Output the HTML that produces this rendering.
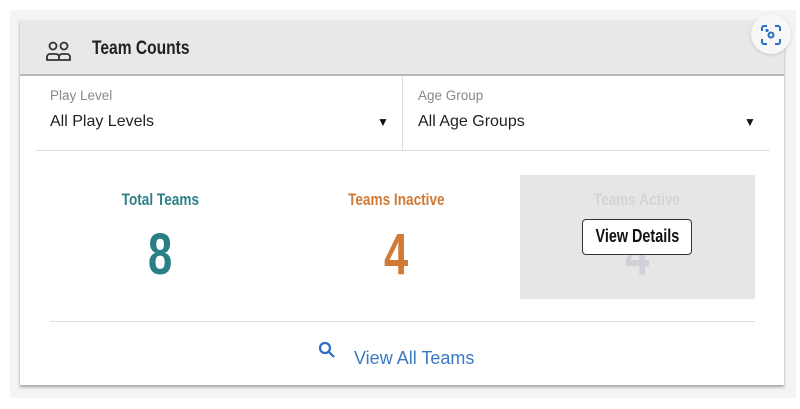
<!DOCTYPE html>
<html><head><meta charset="utf-8"><style>
*{margin:0;padding:0;box-sizing:border-box}
body{width:800px;height:409px;background:#fff;position:relative;overflow:hidden;font-family:"Liberation Sans",sans-serif}
.outer{position:absolute;left:10px;top:10px;width:786px;height:388px;background:#f4f4f4}
.card{position:absolute;left:20px;top:20px;width:764px;height:365px;background:#fff;box-shadow:0 2px 3px rgba(0,0,0,.35)}
.hdr{position:absolute;left:0;top:0;width:764px;height:56px;background:#e8e8e8;border-bottom:2px solid #b8b8b8}
.cond{font-family:"Liberation Sans",sans-serif;font-weight:bold;display:inline-block;transform-origin:center;transform:scaleX(.8)}
.t{position:absolute;left:72px;top:18px;font-size:19px;color:#222;transform-origin:left center}
.lbl{position:absolute;font-size:13.5px;color:#888}
.val{position:absolute;font-size:16px;color:#222}
.arr{position:absolute;font-size:12px;color:#111}
.stat{position:absolute;text-align:center;width:200px}
.num{font-size:58px;transform:scaleX(.75)}
.btn{position:absolute;left:562px;top:199px;width:110px;height:36px;border:1.5px solid #333;border-radius:4px;background:#fff;text-align:center;line-height:33px;color:#111}
</style></head><body>
<div class="outer"></div>
<div class="card">
 <div class="hdr">
  <svg style="position:absolute;left:25px;top:20px" width="28" height="22" viewBox="0 0 28 22" fill="none" stroke="#333" stroke-width="1.8">
   <circle cx="8" cy="6" r="3.5"/><circle cx="19" cy="6" r="3.5"/>
   <path d="M2 20v-3a3 3 0 0 1 3-3h6a3 3 0 0 1 3 3v3zM14 20v-3a3 3 0 0 1 3-3h5a3 3 0 0 1 3 3v3H14"/>
  </svg>
  <span class="cond t" style="transform:scaleX(.82)">Team Counts</span>
 </div>
 <div class="lbl" style="left:30px;top:68px">Play Level</div>
 <div class="val" style="left:30px;top:93px">All Play Levels</div>
 <div class="arr" style="left:357px;top:95px">▼</div>
 <div style="position:absolute;left:382px;top:56px;width:1px;height:74px;background:#ddd"></div>
 <div class="lbl" style="left:398px;top:68px">Age Group</div>
 <div class="val" style="left:398px;top:93px">All Age Groups</div>
 <div class="arr" style="left:724px;top:95px">▼</div>
 <div style="position:absolute;left:16px;top:130px;width:734px;height:1px;background:#ddd"></div>

 <div class="stat" style="left:40px;top:170px"><span class="cond" style="font-size:17px;color:#2d8088">Total Teams</span></div>
 <div class="stat" style="left:40px;top:201px"><span class="cond num" style="color:#2a7f86">8</span></div>
 <div class="stat" style="left:276px;top:170px"><span class="cond" style="font-size:17px;color:#d07a35">Teams Inactive</span></div>
 <div class="stat" style="left:276px;top:201px"><span class="cond num" style="color:#d07a35">4</span></div>
 <div style="position:absolute;left:500px;top:155px;width:235px;height:124px;background:#e6e6e6"></div>
 <div class="stat" style="left:517px;top:170px"><span class="cond" style="font-size:17px;color:#d4d4d8">Teams Active</span></div>
 <div class="stat" style="left:517px;top:201px"><span class="cond num" style="color:#d0d0d6">4</span></div>
 <div class="btn"><span class="cond" style="font-size:18px">View Details</span></div>

 <div style="position:absolute;left:30px;top:301px;width:705px;height:1px;background:#ddd"></div>
 <svg style="position:absolute;left:298px;top:321px" width="18" height="18" viewBox="0 0 18 18" fill="none" stroke="#2b6cc4" stroke-width="2.2"><circle cx="7" cy="7" r="5"/><path d="M10.5 10.5l5.5 5.5"/></svg>
 <div style="position:absolute;left:334px;top:328px;font-size:18px;color:#3b78c4">View All Teams</div>
</div>
<div style="position:absolute;left:751px;top:14px;width:40px;height:40px;border-radius:50%;background:#f7f7f7;box-shadow:0 1px 3px rgba(0,0,0,.15)"></div>
<svg style="position:absolute;left:760px;top:24px" width="22" height="22" viewBox="0 0 22 22" fill="none" stroke="#2670c9" stroke-width="2"><path d="M2 7V4a2 2 0 0 1 2-2h3M15 2h3a2 2 0 0 1 2 2v3M20 15v3a2 2 0 0 1-2 2h-3M7 20H4a2 2 0 0 1-2-2v-3"/><circle cx="11" cy="11" r="2.5"/><circle cx="7" cy="6.5" r=".6" fill="#2670c9"/></svg>
</body></html>
